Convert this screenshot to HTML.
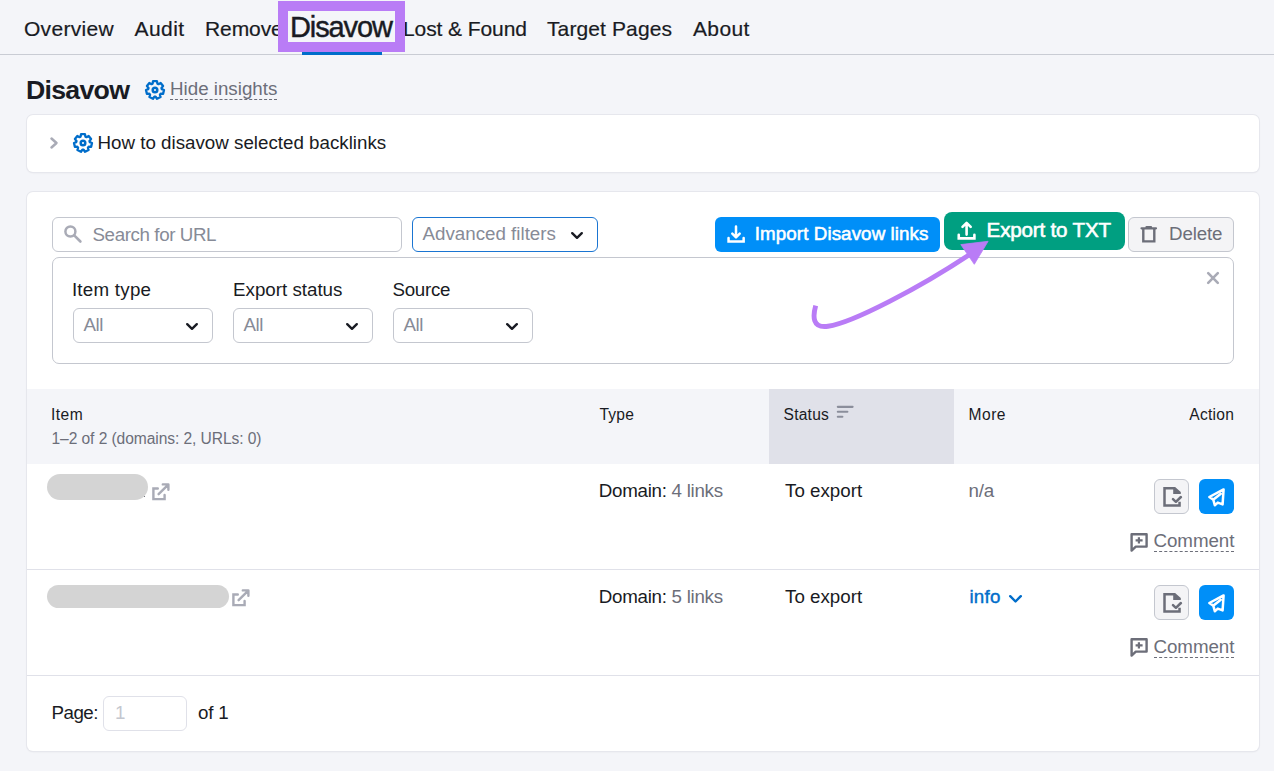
<!DOCTYPE html>
<html><head><meta charset="utf-8">
<style>
*{box-sizing:border-box;margin:0;padding:0}
html,body{width:1274px;height:771px;overflow:hidden;background:#f4f5f9;font-family:"Liberation Sans",sans-serif;color:#191b23}
.a{position:absolute}
.t{position:absolute;white-space:nowrap;line-height:1}
.f18{font-size:18.75px}
.f15{font-size:15.6px}
.g{color:#6c6e79}
.ph{color:#878b97}
svg{position:absolute;overflow:visible}
.box{position:absolute;border:1px solid #c4c7cf;border-radius:6px;background:#fff}
</style></head><body>

<!-- NAV -->
<div class="a" style="left:0;top:54px;width:1274px;height:1px;background:#c9ccd4"></div>
<div class="t" style="left:24px;top:18.2px;font-size:21px;letter-spacing:0.29px;-webkit-text-stroke:0.2px #191b23">Overview</div>
<div class="t" style="left:134.5px;top:18.2px;font-size:21px;letter-spacing:0.43px;-webkit-text-stroke:0.2px #191b23">Audit</div>
<div class="t" style="left:205px;top:18.2px;font-size:21px;letter-spacing:-0.08px;-webkit-text-stroke:0.2px #191b23">Remove</div>
<div class="t" style="left:403px;top:18.2px;font-size:21px;letter-spacing:-0.09px;-webkit-text-stroke:0.2px #191b23">Lost &amp; Found</div>
<div class="t" style="left:547px;top:18.2px;font-size:21px;letter-spacing:0.11px;-webkit-text-stroke:0.2px #191b23">Target Pages</div>
<div class="t" style="left:693px;top:18.2px;font-size:21px;letter-spacing:0.35px;-webkit-text-stroke:0.2px #191b23">About</div>
<div class="a" style="left:302px;top:52px;width:80px;height:3px;background:#006dca"></div>
<!-- highlight box -->
<div class="a" style="left:278px;top:1px;width:127px;height:51px;border:10px solid #b97cf6;background:#f4f5f9"></div>
<div class="t" style="left:290px;top:13.25px;font-size:29px;letter-spacing:-1.1px;-webkit-text-stroke:0.45px #191b23">Disavow</div>

<!-- TITLE -->
<div class="t" style="left:26px;top:77.4px;font-size:26.7px;font-weight:700;letter-spacing:-0.73px">Disavow</div>
<svg style="left:145px;top:80px" width="20" height="20" viewBox="0 0 20 20"><path d="M7.60 3.64 L8.04 1.22 L11.96 1.22 L12.40 3.64 L13.48 4.16 L15.64 2.99 L18.09 6.06 L16.47 7.90 L16.74 9.08 L19.00 10.04 L18.13 13.87 L15.67 13.75 L14.92 14.69 L15.58 17.06 L12.04 18.77 L10.60 16.77 L9.40 16.77 L7.96 18.77 L4.42 17.06 L5.08 14.69 L4.33 13.75 L1.87 13.87 L1.00 10.04 L3.26 9.08 L3.53 7.90 L1.91 6.06 L4.36 2.99 L6.52 4.16Z" fill="none" stroke="#006dca" stroke-width="2.3" stroke-linejoin="round"/><circle cx="10" cy="10" r="2.3" fill="none" stroke="#006dca" stroke-width="2.5"/></svg>
<div class="t f18 g" style="left:170px;top:80.10px">Hide insights</div>
<div class="a" style="left:170px;top:99px;width:107px;height:0;border-top:1px dashed #6c6e79"></div>

<!-- INSIGHT PANEL -->
<div class="a" style="left:27px;top:115px;width:1232px;height:57px;background:#fff;border-radius:6px;box-shadow:0 0 0 1px #e6e7ed,0 1px 2px rgba(0,0,0,.08)"></div>
<svg style="left:50px;top:137px" width="8" height="12" viewBox="0 0 8 12"><path d="M1.5 1.5 L6.5 6 L1.5 10.5" fill="none" stroke="#a9abb6" stroke-width="2.5" stroke-linecap="round" stroke-linejoin="round"/></svg>
<svg style="left:73px;top:133px" width="20" height="20" viewBox="0 0 20 20"><path d="M7.60 3.64 L8.04 1.22 L11.96 1.22 L12.40 3.64 L13.48 4.16 L15.64 2.99 L18.09 6.06 L16.47 7.90 L16.74 9.08 L19.00 10.04 L18.13 13.87 L15.67 13.75 L14.92 14.69 L15.58 17.06 L12.04 18.77 L10.60 16.77 L9.40 16.77 L7.96 18.77 L4.42 17.06 L5.08 14.69 L4.33 13.75 L1.87 13.87 L1.00 10.04 L3.26 9.08 L3.53 7.90 L1.91 6.06 L4.36 2.99 L6.52 4.16Z" fill="none" stroke="#006dca" stroke-width="2.3" stroke-linejoin="round"/><circle cx="10" cy="10" r="2.3" fill="none" stroke="#006dca" stroke-width="2.5"/></svg>
<div class="t f18" style="left:97.5px;top:134.00px">How to disavow selected backlinks</div>

<!-- MAIN CARD -->
<div class="a" style="left:27px;top:192px;width:1232px;height:559px;background:#fff;border-radius:6px;box-shadow:0 0 0 1px #e6e7ed,0 1px 2px rgba(0,0,0,.08)"></div>

<!-- toolbar -->
<div class="box" style="left:52px;top:217px;width:350px;height:35px"></div>
<svg style="left:64px;top:225px" width="18" height="18" viewBox="0 0 18 18"><circle cx="6.4" cy="6.5" r="5" fill="none" stroke="#a9abb6" stroke-width="2.5"/><path d="M10.2 10.3 L16.4 16.5" stroke="#a9abb6" stroke-width="2.6" stroke-linecap="round"/></svg>
<div class="t f18 ph" style="left:92.5px;top:226.20px;letter-spacing:-0.4px">Search for URL</div>

<div class="box" style="left:412px;top:217px;width:186px;height:35px;border-color:#1a75d2"></div>
<div class="t f18 ph" style="left:422.5px;top:225.10px">Advanced filters</div>
<svg style="left:571px;top:232px" width="12" height="7" viewBox="0 0 12 7"><path d="M1.2 1.2 L6 5.8 L10.8 1.2" fill="none" stroke="#191b23" stroke-width="2.4" stroke-linecap="round" stroke-linejoin="round"/></svg>

<div class="a" style="left:715px;top:217px;width:225px;height:35px;background:#008ff8;border-radius:6px"></div>
<svg style="left:727px;top:225px" width="18" height="18" viewBox="0 0 18 18"><path d="M1.55 13 V16.45 H16.65 V13" fill="none" stroke="#fff" stroke-width="2.5" stroke-linecap="round"/><path d="M9 1.5 V12 M5.3 8.6 L9 12.3 L12.7 8.6" fill="none" stroke="#fff" stroke-width="2.5" stroke-linecap="round" stroke-linejoin="round"/></svg>
<div class="t f18" style="left:754.8px;top:224.90px;color:#fff;letter-spacing:0.09px;-webkit-text-stroke:0.55px #fff">Import Disavow links</div>

<div class="a" style="left:944px;top:212px;width:181px;height:38px;background:#009f81;border-radius:8px"></div>
<svg style="left:957px;top:221px" width="20" height="20" viewBox="0 0 20 20"><path d="M1.75 13.7 V17.4 H17.4 V13.7" fill="none" stroke="#fff" stroke-width="2.6" stroke-linecap="round"/><path d="M9.6 13.6 V2 M5.5 5.9 L9.6 1.8 L13.7 5.9" fill="none" stroke="#fff" stroke-width="2.6" stroke-linecap="round" stroke-linejoin="round"/></svg>
<div class="t" style="left:986.6px;top:219.96px;font-size:20.6px;color:#fff;letter-spacing:-0.18px;-webkit-text-stroke:0.6px #fff">Export to TXT</div>

<div class="box" style="left:1128px;top:217px;width:106px;height:35px;background:#f4f4f6"></div>
<svg style="left:1141px;top:225.5px" width="16" height="17" viewBox="0 0 16 17"><path d="M0.5 2.3 H15 M5.5 1 H10" fill="none" stroke="#6c6e79" stroke-width="2.2" stroke-linecap="round"/><path d="M2.3 2.3 V15.4 H13.3 V2.3" fill="none" stroke="#6c6e79" stroke-width="2.4"/></svg>
<div class="t f18 g" style="left:1169px;top:225.40px;letter-spacing:-0.16px">Delete</div>

<!-- filter panel -->
<div class="box" style="left:52px;top:257px;width:1182px;height:107px;border-radius:7px"></div>
<svg style="left:1207px;top:272px" width="12" height="12" viewBox="0 0 12 12"><path d="M1.2 1.2 L10.8 10.8 M10.8 1.2 L1.2 10.8" stroke="#a9abb6" stroke-width="2.6" stroke-linecap="round"/></svg>
<div class="t f18" style="left:71.9px;top:281.10px;letter-spacing:0.25px">Item type</div>
<div class="t f18" style="left:233px;top:281.10px">Export status</div>
<div class="t f18" style="left:392.5px;top:281.10px;letter-spacing:-0.28px">Source</div>
<div class="box" style="left:73px;top:308px;width:140px;height:35px"></div>
<div class="box" style="left:233px;top:308px;width:140px;height:35px"></div>
<div class="box" style="left:393px;top:308px;width:140px;height:35px"></div>
<div class="t f18 ph" style="left:83.5px;top:315.90px;letter-spacing:-0.5px">All</div>
<div class="t f18 ph" style="left:243.5px;top:315.90px;letter-spacing:-0.5px">All</div>
<div class="t f18 ph" style="left:403.5px;top:315.90px;letter-spacing:-0.5px">All</div>
<svg style="left:186px;top:322.5px" width="12" height="7" viewBox="0 0 12 7"><path d="M1.2 1.2 L6 5.8 L10.8 1.2" fill="none" stroke="#191b23" stroke-width="2.4" stroke-linecap="round" stroke-linejoin="round"/></svg>
<svg style="left:346px;top:322.5px" width="12" height="7" viewBox="0 0 12 7"><path d="M1.2 1.2 L6 5.8 L10.8 1.2" fill="none" stroke="#191b23" stroke-width="2.4" stroke-linecap="round" stroke-linejoin="round"/></svg>
<svg style="left:506px;top:322.5px" width="12" height="7" viewBox="0 0 12 7"><path d="M1.2 1.2 L6 5.8 L10.8 1.2" fill="none" stroke="#191b23" stroke-width="2.4" stroke-linecap="round" stroke-linejoin="round"/></svg>

<!-- arrow -->
<svg style="left:0;top:0" width="1274" height="771" viewBox="0 0 1274 771"><path d="M815.7 305.7 C812.8 316 812 328.5 828 326.3 C852.4 322.9 919.8 287.8 972 253" fill="none" stroke="#b97cf6" stroke-width="4.9"/><path d="M960.8 244.6 L988.1 241.3 L974.3 264.3 Z" fill="#b97cf6" stroke="#b97cf6" stroke-width="0.8" stroke-linejoin="round"/></svg>

<!-- table header -->
<div class="a" style="left:27px;top:389px;width:1232px;height:75px;background:#f4f5f9"></div>
<div class="a" style="left:769px;top:389px;width:185px;height:75px;background:#e0e1e9"></div>
<div class="t f15" style="left:50.9px;top:406.50px;letter-spacing:0.5px">Item</div>
<div class="t f15 g" style="left:51.5px;top:431.30px;letter-spacing:-0.08px">1–2 of 2 (domains: 2, URLs: 0)</div>
<div class="t f15" style="left:599.5px;top:406.50px;letter-spacing:0.2px">Type</div>
<div class="t f15" style="left:783.6px;top:406.50px;letter-spacing:0.2px">Status</div>
<svg style="left:837px;top:406px" width="16" height="12" viewBox="0 0 16 12"><path d="M0.8 0.85 H15.6 M0.8 5.8 H10.4 M0.8 10.8 H5.4" stroke="#8b8e9b" stroke-width="2.1" stroke-linecap="round"/></svg>
<div class="t f15" style="left:968.5px;top:406.50px;letter-spacing:0.5px">More</div>
<div class="t f15" style="left:1189.3px;top:406.50px;letter-spacing:0.26px">Action</div>

<!-- row 1 -->
<div class="a" style="left:47px;top:474px;width:101px;height:26px;border-radius:13px;background:#d4d4d4"></div>
<div class="a" style="left:143.5px;top:495.5px;width:1.8px;height:1.8px;border-radius:1px;background:#4a4c55"></div>
<svg style="left:152px;top:483px" width="18" height="18" viewBox="0 0 18 18"><path d="M5.8 5.5 H1.4 V16.1 H12.6 V12" fill="none" stroke="#a9abb6" stroke-width="2.4" stroke-linecap="round"/><path d="M6.6 11.2 L16 1.8 M10.8 1.4 H16.4 V6.8" fill="none" stroke="#a9abb6" stroke-width="2.4" stroke-linecap="round" stroke-linejoin="round"/></svg>
<div class="t f18" style="left:598.8px;top:482.10px;letter-spacing:-0.28px">Domain: <span class="g">4 links</span></div>
<div class="t f18" style="left:785px;top:482.10px">To export</div>
<div class="t f18 g" style="left:968.6px;top:482.10px;letter-spacing:-0.25px">n/a</div>
<div class="box" style="left:1154px;top:479px;width:35px;height:35px;background:#f4f4f6"></div>
<svg style="left:1158px;top:482px" width="30" height="30" viewBox="0 0 30 30"><path d="M5.25 5.06 H17.1 L22.8 10 V12.1 H15.2 V7.56 H7.75 V22.2 H20.3 V19.8 H22.8 V24.7 H5.25 Z" fill="#6c6e79"/><path d="M15 17.1 L17.9 19.8 L22.9 15" fill="none" stroke="#6c6e79" stroke-width="2.5" stroke-linecap="round" stroke-linejoin="round"/></svg>
<div class="a" style="left:1199px;top:479px;width:35px;height:35px;background:#008ff8;border-radius:6px"></div>
<svg style="left:1202px;top:482px" width="30" height="30" viewBox="0 0 30 30"><path d="M21.6 7.4 L7.3 15 L11.3 17.6 L12.8 23.2 L15.8 20.6 L20.6 22.4 Z M11.5 17.6 L18.8 11.8" fill="none" stroke="#fff" stroke-width="2.5" stroke-linejoin="round" stroke-linecap="round"/></svg>
<svg style="left:1126px;top:528px" width="26" height="28" viewBox="0 0 26 28"><path d="M5.6 22.6 V6.3 H20.6 V18.6 H9.8 Z" fill="none" stroke="#6c6e79" stroke-width="2.4" stroke-linejoin="round"/><path d="M12.9 9.2 V15.4 M9.6 12.3 H16.6" stroke="#6c6e79" stroke-width="2.2"/></svg>
<div class="t f18 g" style="left:1153.5px;top:531.50px;letter-spacing:-0.07px">Comment</div>
<div class="a" style="left:1154px;top:551px;width:80px;height:0;border-top:1px dashed #6c6e79"></div>
<div class="a" style="left:27px;top:569px;width:1232px;height:1px;background:#e0e1e9"></div>

<!-- row 2 -->
<div class="a" style="left:47px;top:585px;width:182px;height:23px;border-radius:12px;background:#d4d4d4"></div>
<svg style="left:232px;top:589px" width="18" height="18" viewBox="0 0 18 18"><path d="M5.8 5.5 H1.4 V16.1 H12.6 V12" fill="none" stroke="#a9abb6" stroke-width="2.4" stroke-linecap="round"/><path d="M6.6 11.2 L16 1.8 M10.8 1.4 H16.4 V6.8" fill="none" stroke="#a9abb6" stroke-width="2.4" stroke-linecap="round" stroke-linejoin="round"/></svg>
<div class="t f18" style="left:598.8px;top:588.10px;letter-spacing:-0.28px">Domain: <span class="g">5 links</span></div>
<div class="t f18" style="left:785px;top:588.10px">To export</div>
<div class="t f18" style="left:969.5px;top:588.10px;color:#006dca;letter-spacing:0.2px;-webkit-text-stroke:0.4px #006dca">info</div>
<svg style="left:1009px;top:595px" width="13" height="8" viewBox="0 0 13 8"><path d="M1.2 1.2 L6.5 6.5 L11.8 1.2" fill="none" stroke="#006dca" stroke-width="2.4" stroke-linecap="round" stroke-linejoin="round"/></svg>
<div class="box" style="left:1154px;top:585px;width:35px;height:35px;background:#f4f4f6"></div>
<svg style="left:1158px;top:588px" width="30" height="30" viewBox="0 0 30 30"><path d="M5.25 5.06 H17.1 L22.8 10 V12.1 H15.2 V7.56 H7.75 V22.2 H20.3 V19.8 H22.8 V24.7 H5.25 Z" fill="#6c6e79"/><path d="M15 17.1 L17.9 19.8 L22.9 15" fill="none" stroke="#6c6e79" stroke-width="2.5" stroke-linecap="round" stroke-linejoin="round"/></svg>
<div class="a" style="left:1199px;top:585px;width:35px;height:35px;background:#008ff8;border-radius:6px"></div>
<svg style="left:1202px;top:588px" width="30" height="30" viewBox="0 0 30 30"><path d="M21.6 7.4 L7.3 15 L11.3 17.6 L12.8 23.2 L15.8 20.6 L20.6 22.4 Z M11.5 17.6 L18.8 11.8" fill="none" stroke="#fff" stroke-width="2.5" stroke-linejoin="round" stroke-linecap="round"/></svg>
<svg style="left:1126px;top:633.4px" width="26" height="28" viewBox="0 0 26 28"><path d="M5.6 22.6 V6.3 H20.6 V18.6 H9.8 Z" fill="none" stroke="#6c6e79" stroke-width="2.4" stroke-linejoin="round"/><path d="M12.9 9.2 V15.4 M9.6 12.3 H16.6" stroke="#6c6e79" stroke-width="2.2"/></svg>
<div class="t f18 g" style="left:1153.5px;top:637.50px;letter-spacing:-0.07px">Comment</div>
<div class="a" style="left:1154px;top:657px;width:80px;height:0;border-top:1px dashed #6c6e79"></div>
<div class="a" style="left:27px;top:675px;width:1232px;height:1px;background:#e0e1e9"></div>

<!-- pagination -->
<div class="t f18" style="left:51.5px;top:704.20px;letter-spacing:-0.5px">Page:</div>
<div class="box" style="left:103px;top:696px;width:84px;height:35px;border-color:#e0e1e9"></div>
<div class="t f18" style="left:115px;top:704.20px;color:#c4c7cf">1</div>
<div class="t f18" style="left:198px;top:704.20px;letter-spacing:-0.2px">of 1</div>

</body></html>
